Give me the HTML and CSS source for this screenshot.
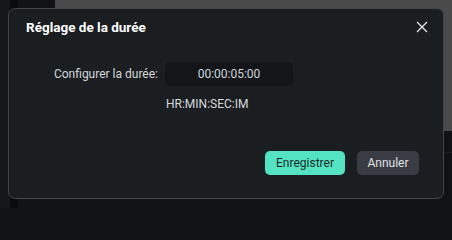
FILE: index.html
```html
<!DOCTYPE html>
<html lang="fr">
<head>
<meta charset="utf-8">
<title>Réglage de la durée</title>
<link rel="stylesheet" href="styles.css">
</head>
<body>
<div class="backdrop">
  <div class="strip strip-a"></div>
  <div class="strip strip-b"></div>
  <div class="strip strip-c"></div>
  <div class="panel-col">
    <div class="panel"></div>
    <div class="panel-line"></div>
  </div>
</div>
<div class="dialog">
  <div class="header">
    <div class="title">Réglage de la durée</div>
    <svg class="close" width="12" height="12" viewBox="0 0 12 12"><path d="M1 1L11 11M11 1L1 11" stroke="#e6e8ea" stroke-width="1.3" fill="none"/></svg>
  </div>
  <div class="row">
    <div class="label">Configurer la durée:</div>
    <div class="field">00:00:05:00</div>
  </div>
  <div class="hint">HR:MIN:SEC:IM</div>
  <div class="footer">
    <button class="btn btn-primary">Enregistrer</button>
    <button class="btn btn-secondary">Annuler</button>
  </div>
</div>
</body>
</html>
```

FILE: styles.css
```css
html, body {
  margin: 0;
  padding: 0;
  background: #111213;
}
body {
  width: 452px;
  height: 208px;
  font-family: Roboto, "Noto Sans", sans-serif;
  position: relative;
  overflow: hidden;
}
.backdrop {
  display: flex;
  height: 208px;
}
.strip-a { width: 10px; background: #161718; }
.strip-b { width: 8px; background: #0a0b0c; }
.strip-c { width: 37px; background: #111213; }
.panel-col { flex: 1; display: flex; flex-direction: column; }
.panel { height: 131px; background: #4a4a4b; }
.panel-line { margin-top: 21px; height: 1px; background: #1e1f21; }

.dialog {
  position: absolute;
  left: 8px;
  top: 8px;
  width: 434px;
  height: 189px;
  background: #1b1e21;
  border: 1px solid #41454a;
  border-radius: 7px;
  display: flex;
  flex-direction: column;
}
.header {
  height: 36px;
  padding: 0 15px 0 17px;
  display: flex;
  align-items: center;
  justify-content: space-between;
}
.title {
  color: #ffffff;
  font-size: 13.5px;
  font-weight: 700;
}
.close { display: block; }

.row {
  margin-top: 17px;
  display: flex;
  align-items: center;
  gap: 7px;
}
.label {
  width: 149px;
  text-align: right;
  color: #d3d6d9;
  font-size: 12px;
}
.field {
  width: 128px;
  height: 24px;
  line-height: 24px;
  background: #131518;
  border-radius: 5px;
  text-align: center;
  color: #cdd6de;
  font-size: 12px;
}
.hint {
  margin-top: 10px;
  margin-left: 157px;
  line-height: 16px;
  color: #d3d8dd;
  font-size: 12px;
}
.footer {
  margin-top: auto;
  padding: 0 24px 23px 0;
  display: flex;
  justify-content: flex-end;
  gap: 12px;
}
.btn {
  height: 24px;
  border: none;
  border-radius: 5px;
  font-family: inherit;
  font-size: 12px;
  padding: 0;
}
.btn-primary {
  width: 80px;
  background: #53e3c3;
  color: #1e2b29;
}
.btn-secondary {
  width: 62px;
  background: #393d43;
  color: #e0e4e8;
}
```
